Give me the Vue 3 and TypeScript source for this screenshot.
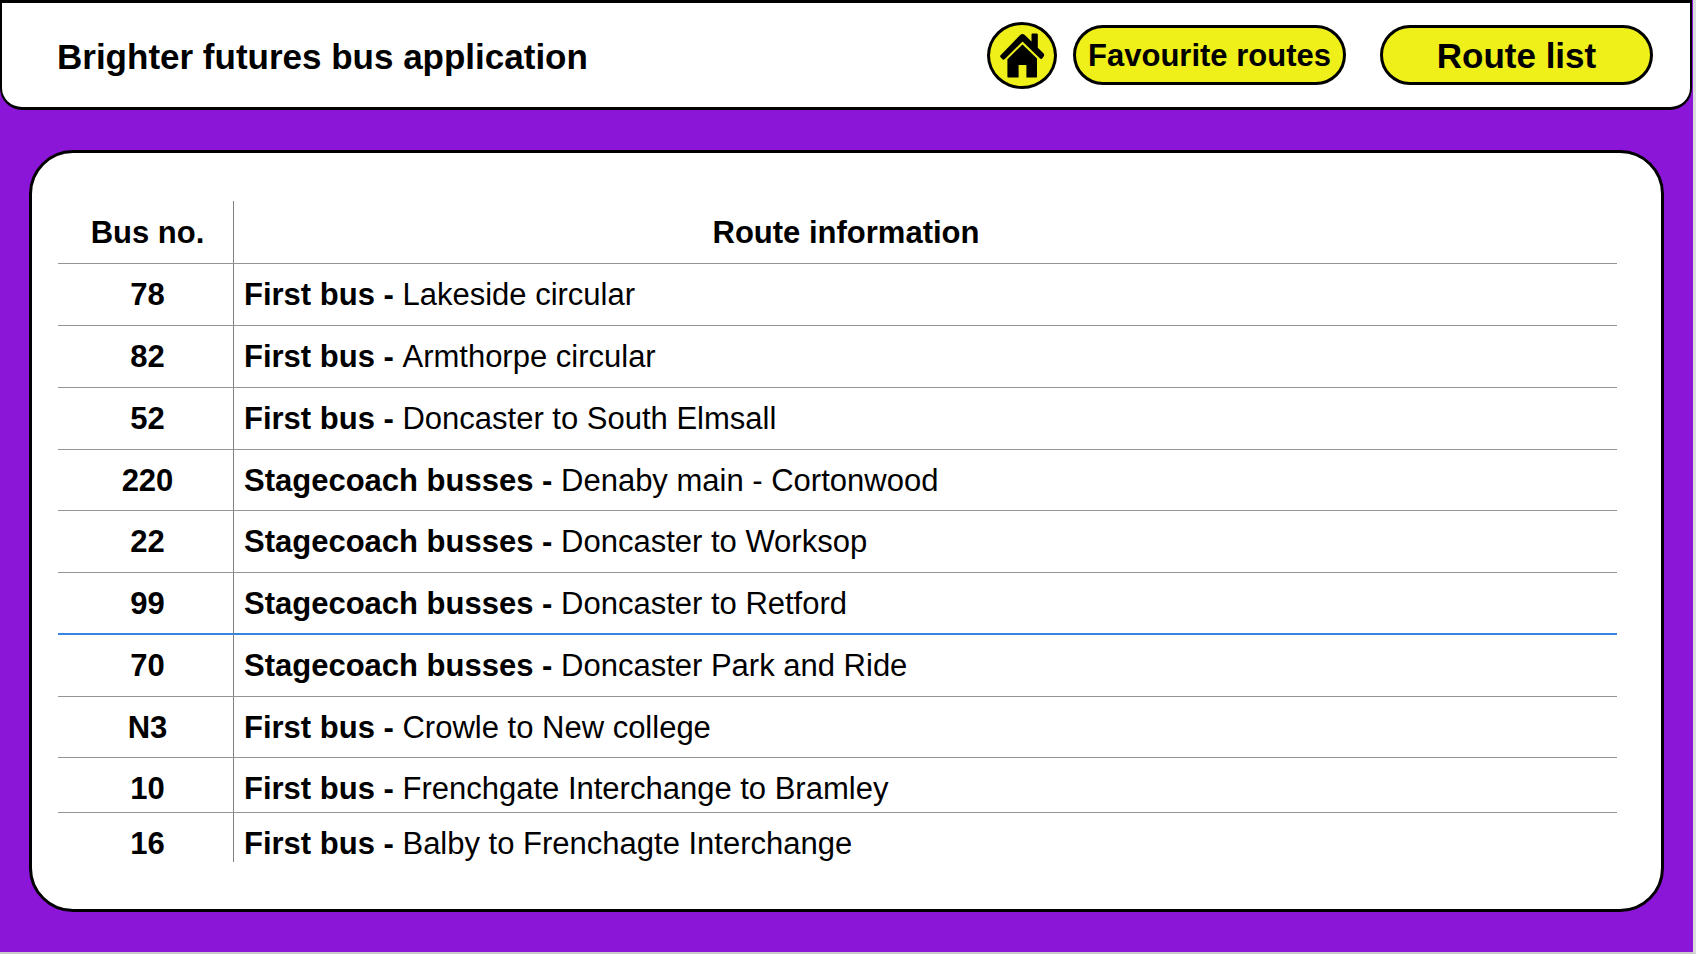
<script setup lang="ts">
interface Route {
  bus: string
  operator: string
  name: string
  selected?: boolean
}

const routes: Route[] = [
  { bus: '78', operator: 'First bus', name: 'Lakeside circular' },
  { bus: '82', operator: 'First bus', name: 'Armthorpe circular' },
  { bus: '52', operator: 'First bus', name: 'Doncaster to South Elmsall' },
  { bus: '220', operator: 'Stagecoach busses', name: 'Denaby main - Cortonwood' },
  { bus: '22', operator: 'Stagecoach busses', name: 'Doncaster to Worksop' },
  { bus: '99', operator: 'Stagecoach busses', name: 'Doncaster to Retford', selected: true },
  { bus: '70', operator: 'Stagecoach busses', name: 'Doncaster Park and Ride' },
  { bus: 'N3', operator: 'First bus', name: 'Crowle to New college' },
  { bus: '10', operator: 'First bus', name: 'Frenchgate Interchange to Bramley' },
  { bus: '16', operator: 'First bus', name: 'Balby to Frenchagte Interchange' },
]
</script>

<template>
  <div class="page">
    <header class="bar">
      <h1 class="title">Brighter futures bus application</h1>
      <nav class="nav">
        <button class="home" type="button" aria-label="Home">
          <svg viewBox="0 0 70 67" aria-hidden="true">
            <path d="M13.6 33.2 33.2 13Q35.5 11 37.8 13L44.5 19.5V12.600Q44.5 11.400 45.7 11.400H49.600Q50.8 11.400 50.8 12.600V25.8L56.6 31.6Q57.8 33 56.6 34.400L55.4 36.2Q54.2 37.600 52.8 36.2L35.5 19.5 17.8 37Q16.400 38.400 15.2 37L13.6 35.2Q12.600 34.2 13.6 33.2Z" />
            <path d="M35.5 22.400 50 36.600V54.400Q50 55.600 48.8 55.600H39.400V43H31.600V55.600H21.600Q20.400 55.600 20.400 54.400V37.2Z" />
          </svg>
        </button>
        <button class="pill favourites" type="button">Favourite routes</button>
        <button class="pill list" type="button">Route list</button>
      </nav>
    </header>

    <main class="card">
      <table class="routes">
        <thead>
          <tr>
            <th class="number" scope="col">Bus no.</th>
            <th class="heading" scope="col">Route information</th>
          </tr>
        </thead>
        <tbody>
          <tr v-for="route in routes" :key="route.bus" :class="{ selected: route.selected }">
            <th class="number" scope="row">{{ route.bus }}</th>
            <td><strong>{{ route.operator }} - </strong>{{ route.name }}</td>
          </tr>
        </tbody>
      </table>
    </main>
  </div>
</template>

<style>
body {
  margin: 0;
}
</style>

<style scoped>
.page {
  box-sizing: border-box;
  min-height: 100vh;
  padding-bottom: 40px;
  border-right: 3px solid #dcdcdc;
  border-bottom: 2px solid #cbcbcb;
  background: #8c16d8;
  color: #000;
  font-family: "Liberation Sans", Arial, sans-serif;
}

.bar {
  box-sizing: border-box;
  display: flex;
  align-items: center;
  justify-content: space-between;
  min-height: 110px;
  margin-right: 1px;
  padding: 0 37px 0 55px;
  border: 3px solid #000;
  border-width: 3px 2px;
  border-radius: 0 0 22px 22px;
  background: #fff;
}

.title {
  margin: 0;
  padding-top: 3px;
  font-size: 35px;
  line-height: 40px;
}

.nav {
  display: flex;
  align-items: center;
}

.home,
.pill {
  box-sizing: border-box;
  padding: 0;
  border: 3px solid #000;
  background: #eff01a;
  color: #000;
  font-family: inherit;
  font-weight: bold;
  cursor: pointer;
}

.home {
  width: 70px;
  height: 67px;
  margin-right: 16px;
  border-radius: 50%;
}

.home svg {
  display: block;
  width: 70px;
  height: 67px;
  margin: -3px;
}

.pill {
  width: 273px;
  height: 60px;
  padding-top: 2px;
  border-radius: 30px;
  line-height: 40px;
  white-space: nowrap;
}

.favourites {
  margin-right: 34px;
  font-size: 31px;
}

.list {
  font-size: 35px;
}

.card {
  margin: 40px 29px 0;
  padding: 48px 44px 47px 26px;
  border: 3px solid #000;
  border-radius: 44px;
  background: #fff;
}

.routes {
  width: 100%;
  border-collapse: separate;
  border-spacing: 0;
  table-layout: fixed;
  font-size: 31px;
  line-height: 36px;
}

.routes th,
.routes td {
  box-sizing: border-box;
  height: 62px;
  padding: 13px 10px 0;
  border-bottom: 1px solid #959595;
  text-align: left;
  vertical-align: top;
}

.routes .number {
  width: 176px;
  padding: 13px 0 0 4px;
  border-right: 1px solid #808080;
  text-align: center;
}

.routes thead th {
  height: 63px;
  padding-top: 14px;
}

.routes thead .number {
  padding-top: 14px;
}

.routes thead .heading {
  padding-right: 169px;
  text-align: center;
}

.routes tbody tr:nth-child(4n) > * {
  height: 61px;
}

.routes tbody tr:nth-child(9) > * {
  height: 55px;
}

.routes tbody tr:last-child > * {
  height: 49px;
  border-bottom: 0;
}

.routes .selected > * {
  border-bottom: 2px solid #3584e4;
}
</style>
